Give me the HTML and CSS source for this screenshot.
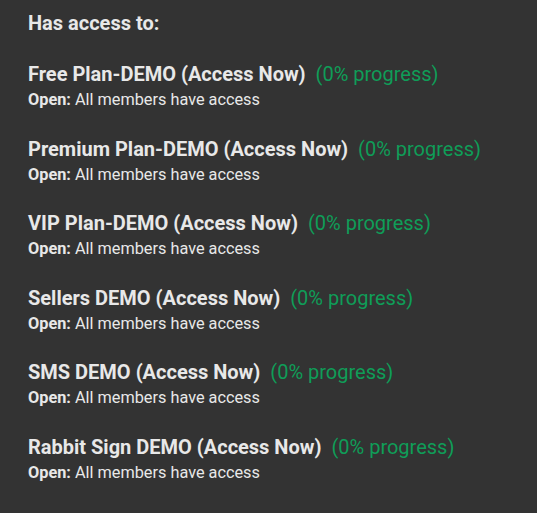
FILE: index.html
```html
<!DOCTYPE html>
<html lang="en">
<head>
<meta charset="UTF-8" />
<meta name="viewport" content="width=device-width, initial-scale=1" />
<title>Access</title>
<link rel="stylesheet" href="styles.css">
</head>
<body>

<div class="access-box">
  <div class="access-heading">Has access to:</div>

  <div class="course">
    <div class="course-title">Free Plan-DEMO (Access Now) <span class="progress">(0% progress)</span></div>
    <div class="course-sub"><strong>Open:</strong> All members have access</div>
  </div>

  <div class="course">
    <div class="course-title">Premium Plan-DEMO (Access Now) <span class="progress">(0% progress)</span></div>
    <div class="course-sub"><strong>Open:</strong> All members have access</div>
  </div>

  <div class="course">
    <div class="course-title">VIP Plan-DEMO (Access Now) <span class="progress">(0% progress)</span></div>
    <div class="course-sub"><strong>Open:</strong> All members have access</div>
  </div>

  <div class="course">
    <div class="course-title">Sellers DEMO (Access Now) <span class="progress">(0% progress)</span></div>
    <div class="course-sub"><strong>Open:</strong> All members have access</div>
  </div>

  <div class="course">
    <div class="course-title">SMS DEMO (Access Now) <span class="progress">(0% progress)</span></div>
    <div class="course-sub"><strong>Open:</strong> All members have access</div>
  </div>

  <div class="course">
    <div class="course-title">Rabbit Sign DEMO (Access Now) <span class="progress">(0% progress)</span></div>
    <div class="course-sub"><strong>Open:</strong> All members have access</div>
  </div>
</div>

</body>
</html>
```

FILE: styles.css
```css
body {
  background-color: #333333;
  font-family: Roboto, 'Liberation Sans', sans-serif;
  margin: 0;
  color: #e8e8e8;
}
.access-box {
  padding: 10px 28px 0;
}
.access-heading {
  font-size: 20px;
  font-weight: 700;
  line-height: 26px;
  margin-bottom: 25px;
}
.course {
  margin-bottom: 22.5px;
}
.course-title {
  font-size: 20px;
  font-weight: 700;
  line-height: 26px;
}
.progress {
  font-weight: 400;
  color: #0f9d58;
  margin-left: 5px;
}
.course-sub {
  font-size: 16.3px;
  line-height: 26px;
}
.course-sub strong {
  font-weight: 700;
}
```
